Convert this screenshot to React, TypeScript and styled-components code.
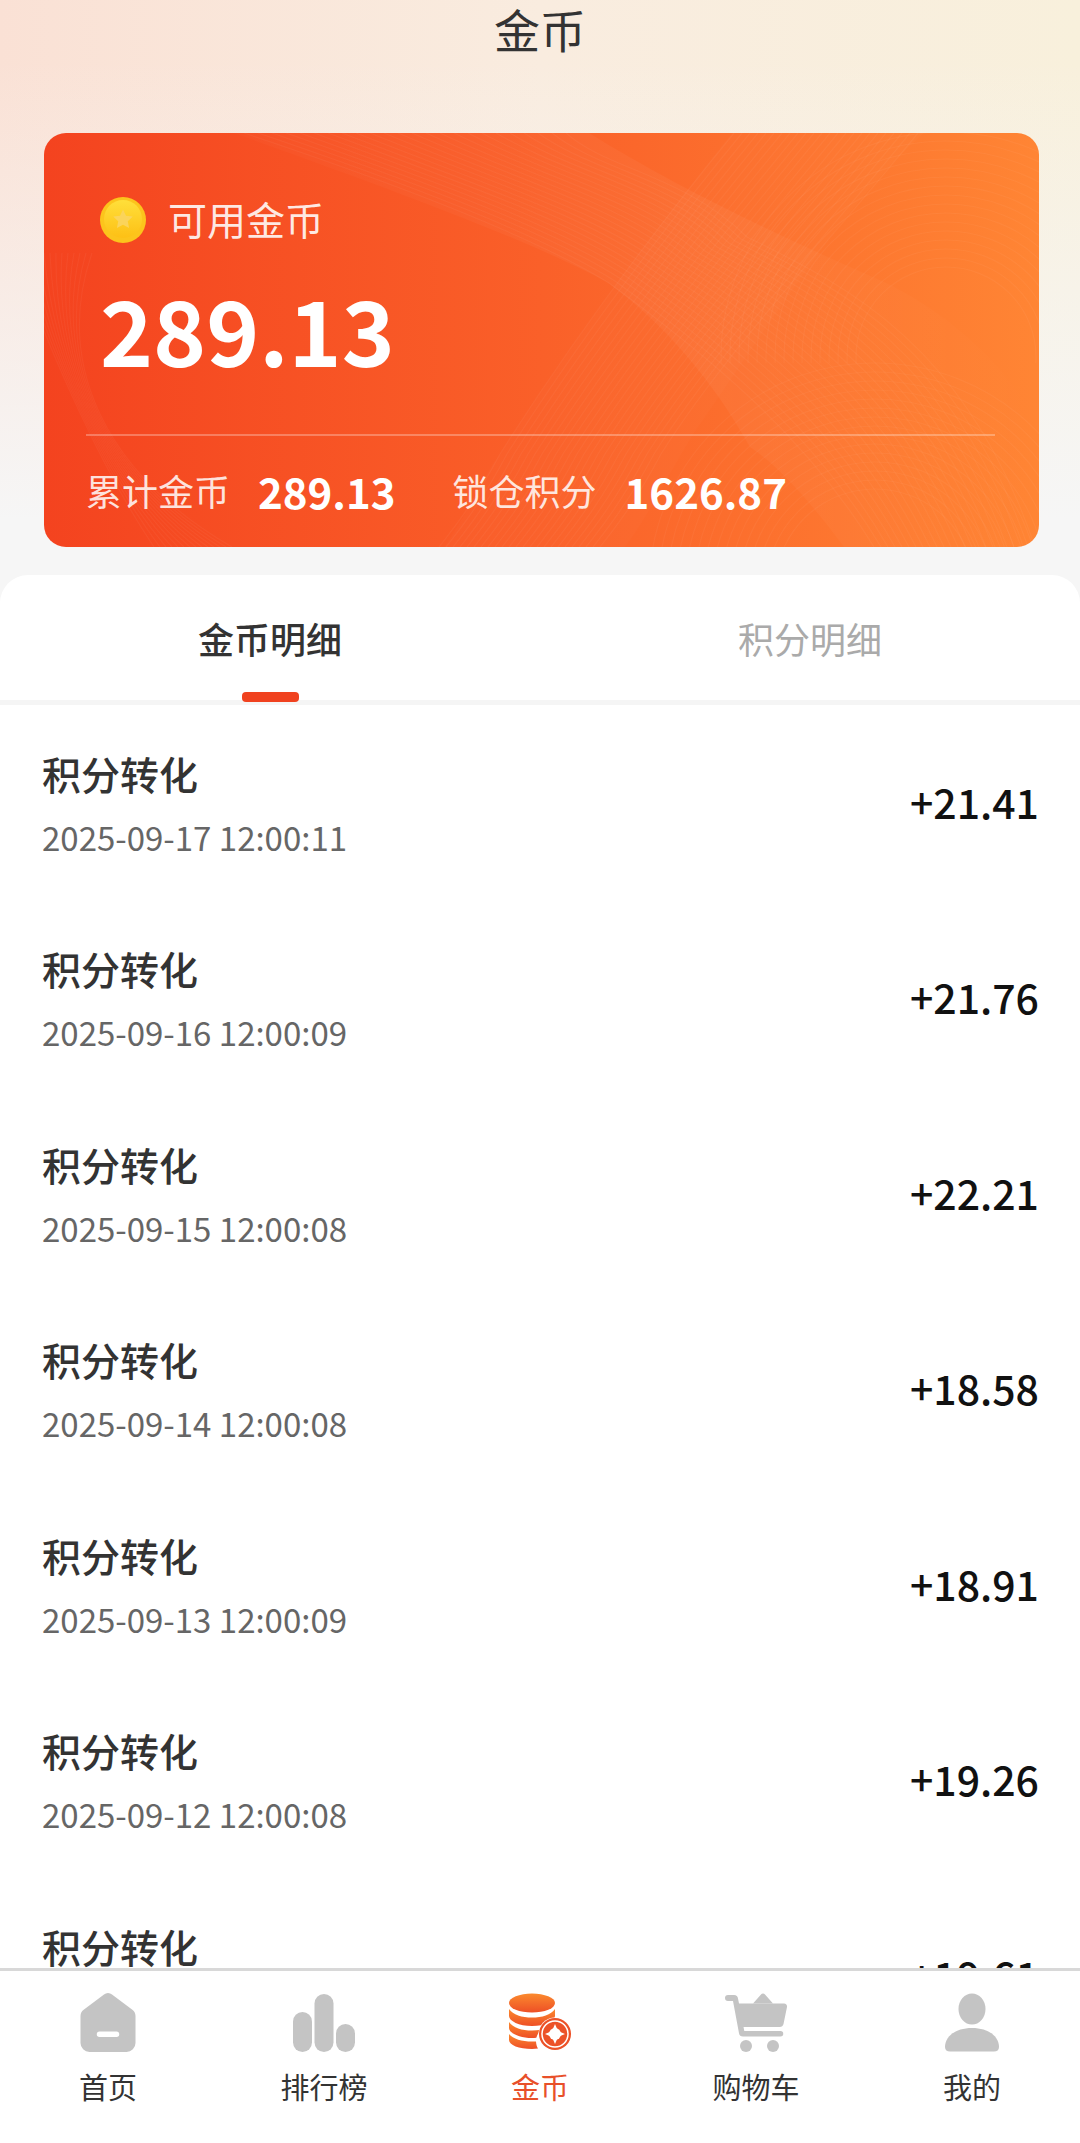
import styled, { createGlobalStyle } from "styled-components";

const records = [
  { time: "2025-09-17 12:00:11", amount: "+21.41" },
  { time: "2025-09-16 12:00:09", amount: "+21.76" },
  { time: "2025-09-15 12:00:08", amount: "+22.21" },
  { time: "2025-09-14 12:00:08", amount: "+18.58" },
  { time: "2025-09-13 12:00:09", amount: "+18.91" },
  { time: "2025-09-12 12:00:08", amount: "+19.26" },
  { time: "2025-09-11 12:00:08", amount: "+19.61" },
];

const upperRings = Array.from({ length: 16 }, (_, i) => 90 + i * 9);
const lowerRings = Array.from({ length: 15 }, (_, i) => 100 + i * 9);
const bandLines = Array.from({ length: 24 }, (_, i) => i);
const leftLines = Array.from({ length: 14 }, (_, i) => i * 6);

function CardPattern() {
  return (
    <Pattern viewBox="0 0 995 414" preserveAspectRatio="none">
      <defs>
        <linearGradient id="bandFade" x1="0" y1="0" x2="1" y2="0">
          <stop offset="0" stopColor="#fff" stopOpacity="0.015" />
          <stop offset="0.6" stopColor="#fff" stopOpacity="0.04" />
          <stop offset="1" stopColor="#fff" stopOpacity="0" />
        </linearGradient>
        <clipPath id="upperClip">
          <rect x="560" y="0" width="435" height="230" />
        </clipPath>
      </defs>
      <path
        d="M190 0 L545 0 C635 56 742 106 831 145 C900 175 960 230 995 290 L995 414 L800 414 C760 360 730 330 706 314 C670 249 620 190 563 149 C500 115 400 75 190 0 Z"
        fill="url(#bandFade)"
      />
      <path d="M688 0 L880 0 C800 70 720 200 650 300 C620 350 600 390 581 414 L400 414 C430 370 440 340 456 321 C520 220 600 110 688 0 Z" fill="#fff" opacity="0.015" />
      <g fill="none" stroke="#fff" strokeOpacity="0.04" strokeWidth="1.2">
        <g clipPath="url(#upperClip)">
          {upperRings.map((r) => (
            <circle key={r} cx="902" cy="224" r={r} />
          ))}
        </g>
        {lowerRings.map((r) => (
          <circle key={r} cx="831" cy="456" r={r} />
        ))}
        {bandLines.map((i) => (
          <path key={`a${i}`} d={`M${200 + i * 14} 0 C${380 + i * 8} ${60 - i} ${500 + i * 6} ${110 - i * 3} ${565 + i * 6} ${150 - i * 2} C${660 + i * 6} ${220 - i * 3} ${760 + i * 7} ${300 - i * 4} ${830 + i * 7} 414`} />
        ))}
        {bandLines.map((i) => (
          <path key={`b${i}`} d={`M${690 + i * 8} 0 C${600 + i * 8} 110 ${520 + i * 7} 220 ${456 + i * 7} 321 C${430 + i * 7} 370 ${410 + i * 7} 395 ${395 + i * 7} 414`} />
        ))}
        {leftLines.map((d) => (
          <path key={`c${d}`} d={`M${-30 + d} 120 C10 230 60 340 ${110 + d} 414`} />
        ))}
      </g>
    </Pattern>
  );
}

function CoinBadge() {
  return (
    <CoinSvg viewBox="0 0 46 46">
      <defs>
        <linearGradient id="coinFace" x1="0" y1="0" x2="0" y2="1">
          <stop offset="0" stopColor="#ffdf3a" />
          <stop offset="1" stopColor="#fdc015" />
        </linearGradient>
      </defs>
      <circle cx="23" cy="23" r="23" fill="#fcc41c" />
      <circle cx="23" cy="22" r="19" fill="url(#coinFace)" />
      <path d="M23 12.500l3 6.300 6.800.8-5 4.700 1.300 6.800-6.100-3.400-6.100 3.400 1.300-6.800-5-4.700 6.800-.8z" fill="#fbd45a" />
    </CoinSvg>
  );
}

function HomeIcon() {
  return (
    <svg width="64" height="64" viewBox="0 0 64 64">
      <path
        fillRule="evenodd"
        fill="#c4c4c4"
        d="M28 3.500a6 6 0 0 1 8 0l20 15a8 8 0 0 1 3.500 6.500v27a9 9 0 0 1-9 9h-37a9 9 0 0 1-9-9v-27a8 8 0 0 1 3.500-6.500zM23.500 40.500a2 2 0 0 0 0 5.500h17a2 2 0 0 0 0-5.500z"
      />
    </svg>
  );
}

function RankIcon() {
  return (
    <svg width="64" height="64" viewBox="0 0 64 64">
      <g fill="#c4c4c4">
        <rect x="1" y="21" width="19" height="40" rx="9.500" />
        <rect x="22.500" y="3" width="19" height="58" rx="9.500" />
        <rect x="44" y="33" width="19" height="28" rx="9.500" />
      </g>
    </svg>
  );
}

function CoinsIcon() {
  return (
    <svg width="64" height="64" viewBox="0 0 64 64">
      <defs>
        <linearGradient id="stack" x1="0" y1="0" x2="0" y2="1">
          <stop offset="0" stopColor="#fb8a2e" />
          <stop offset="1" stopColor="#ee4f26" />
        </linearGradient>
      </defs>
      <ellipse cx="24" cy="12" rx="23" ry="9.500" fill="url(#stack)" />
      <path fill="url(#stack)" d="M1 18c4 6 13 8.500 23 8.500s19-2.500 23-8.500v7c0 5-10 10-23 10S1 30 1 25z" />
      <path fill="url(#stack)" d="M1 31c4 6 13 8.500 23 8.500 3 0 6-.3 9-.8-2.500 2.600-4 5.400-4.700 8.100-1.400.2-2.800.2-4.300.2C11 47 1 42 1 37z" />
      <path fill="url(#stack)" d="M1 43c4 5 13 7.500 23 7.500h4c.1 2.500.8 5 2 7-2 .3-4 .5-6 .5C11 58 1 54 1 49z" />
      <circle cx="47" cy="43" r="16.500" fill="#fff" />
      <circle cx="47" cy="43" r="16" fill="#ec5228" />
      <circle cx="47" cy="43" r="13" fill="none" stroke="#fff" strokeWidth="1.500" />
      <path fill="#fff" d="M47 33l3 7 7 3-7 3-3 7-3-7-7-3 7-3z" />
      <circle cx="47" cy="43" r="6" fill="#fff" />
    </svg>
  );
}

function CartIcon() {
  return (
    <svg width="64" height="64" viewBox="0 0 64 64">
      <g fill="#c4c4c4">
        <path d="M37 3.500a2.500 2.500 0 0 1 4 0l8 9h-20z" />
        <path d="M4 4h6a4 4 0 0 1 4 3.500l1 5h45a3 3 0 0 1 3 3.500l-3.500 17a4 4 0 0 1-4 3H19.500l.8 4h36.200a2.500 2.500 0 0 1 0 5.500H19a4 4 0 0 1-4-3.300L9 10H4a3 3 0 0 1 0-6z" />
        <circle cx="22" cy="55" r="6" />
        <circle cx="49" cy="55" r="6" />
      </g>
    </svg>
  );
}

function UserIcon() {
  return (
    <svg width="64" height="64" viewBox="0 0 64 64">
      <g fill="#c4c4c4">
        <ellipse cx="32" cy="18" rx="13.500" ry="15.500" />
        <path d="M32 37c16 0 27 8 27 19 0 3-2 4.500-5 4.500H10c-3 0-5-1.500-5-4.500 0-11 11-19 27-19z" />
      </g>
    </svg>
  );
}

const navItems = [
  { label: "首页", icon: <HomeIcon /> },
  { label: "排行榜", icon: <RankIcon /> },
  { label: "金币", icon: <CoinsIcon />, active: true },
  { label: "购物车", icon: <CartIcon /> },
  { label: "我的", icon: <UserIcon /> },
];

export default function App() {
  return (
    <Page>
      <GlobalStyle />
      <TitleBar>金币</TitleBar>
      <BalanceCard>
        <CardPattern />
        <LabelRow>
          <CoinBadge />
          <span>可用金币</span>
        </LabelRow>
        <Balance>289.13</Balance>
        <StatsRow>
          <StatLabel>累计金币</StatLabel>
          <StatValue>289.13</StatValue>
          <StatLabel $spaced>锁仓积分</StatLabel>
          <StatValue>1626.87</StatValue>
        </StatsRow>
      </BalanceCard>
      <Panel>
        <Tabs>
          <Tab $active>金币明细</Tab>
          <Tab>积分明细</Tab>
        </Tabs>
        {records.map((r) => (
          <Row key={r.time}>
            <div>
              <RowTitle>积分转化</RowTitle>
              <RowTime>{r.time}</RowTime>
            </div>
            <Amount>{r.amount}</Amount>
          </Row>
        ))}
      </Panel>
      <BottomNav>
        {navItems.map((item) => (
          <NavItem key={item.label} $active={item.active}>
            {item.icon}
            <span>{item.label}</span>
          </NavItem>
        ))}
      </BottomNav>
    </Page>
  );
}

const GlobalStyle = createGlobalStyle`
  html, body {
    margin: 0;
    padding: 0;
    background: #f6f6f6;
    font-family: "Noto Sans CJK SC", "Noto Sans", sans-serif;
  }
`;

const Page = styled.div`
  width: 1080px;
  height: 2143px;
  display: flex;
  flex-direction: column;
  overflow: hidden;
  background:
    linear-gradient(180deg, rgba(246, 246, 246, 0) 0, rgba(246, 246, 246, 0) 60px, #f6f6f6 520px),
    linear-gradient(90deg, #fae1d5 0%, #f9ecdf 50%, #f8f0dc 100%);
`;

const TitleBar = styled.div`
  height: 56px;
  display: flex;
  align-items: center;
  justify-content: center;
  font-size: 46px;
  line-height: 56px;
  color: #333;
`;

const BalanceCard = styled.section`
  position: relative;
  overflow: hidden;
  height: 414px;
  margin: 77px 41px 0 44px;
  padding: 0 44px 0 42px;
  box-sizing: border-box;
  border-radius: 22px;
  color: #fff;
  background: linear-gradient(90deg, #f4431f 0%, #fa6029 50%, #ff8534 100%);
  display: flex;
  flex-direction: column;
`;

const Pattern = styled.svg`
  position: absolute;
  inset: 0;
  width: 100%;
  height: 100%;
`;

const LabelRow = styled.div`
  position: relative;
  display: flex;
  align-items: center;
  gap: 22px;
  margin-top: 64px;
  padding-left: 14px;
  height: 46px;
  font-size: 39px;
  line-height: 46px;
  color: rgba(255, 255, 255, 0.88);

  span {
    position: relative;
    top: -2px;
  }
`;

const CoinSvg = styled.svg`
  width: 46px;
  height: 46px;
`;

const Balance = styled.div`
  position: relative;
  height: 193px;
  padding: 0 0 0 14px;
  box-sizing: border-box;
  border-bottom: 2px solid rgba(255, 255, 255, 0.28);
  font-size: 90px;
  font-weight: 700;
  line-height: 170px;
`;

const StatsRow = styled.div`
  position: relative;
  display: flex;
  align-items: center;
  height: 108px;
`;

const StatLabel = styled.span<{ $spaced?: boolean }>`
  font-size: 36px;
  color: rgba(255, 255, 255, 0.85);
  margin-left: ${(props) => (props.$spaced ? "57px" : "0")};
`;

const StatValue = styled.span`
  font-size: 42px;
  font-weight: 700;
  margin-left: 28px;
`;

const Panel = styled.main`
  flex: 1;
  min-height: 0;
  overflow: hidden;
  margin-top: 28px;
  background: #fff;
  border-radius: 28px 28px 0 0;
`;

const Tabs = styled.div`
  display: grid;
  grid-template-columns: 1fr 1fr;
  height: 130px;
  box-sizing: border-box;
  border-bottom: 5px solid #f5f5f5;
`;

const Tab = styled.div<{ $active?: boolean }>`
  position: relative;
  display: flex;
  justify-content: center;
  padding-top: 37px;
  font-size: 36px;
  line-height: 52px;
  font-weight: ${(props) => (props.$active ? 500 : 400)};
  color: ${(props) => (props.$active ? "#333" : "#aaa")};

  &::after {
    content: "";
    display: ${(props) => (props.$active ? "block" : "none")};
    position: absolute;
    left: 50%;
    bottom: -2px;
    width: 57px;
    height: 10px;
    margin-left: -28px;
    border-radius: 4px;
    background: #f0421f;
  }
`;

const Row = styled.div`
  height: 195.500px;
  padding: 0 41px 0 42px;
  display: flex;
  align-items: center;
  justify-content: space-between;
`;

const RowTitle = styled.div`
  font-size: 39px;
  font-weight: 500;
  line-height: 56px;
  color: #333;
`;

const RowTime = styled.div`
  font-size: 33px;
  line-height: 48px;
  margin-top: 12px;
  color: #666;
`;

const Amount = styled.div`
  font-size: 41px;
  font-weight: 500;
  color: #111;
  margin-top: -4px;
`;

const BottomNav = styled.nav`
  height: 175px;
  box-sizing: border-box;
  border-top: 3px solid #d8d8d8;
  background: #fff;
  display: grid;
  grid-template-columns: repeat(5, 1fr);
  padding-top: 20px;
`;

const NavItem = styled.div<{ $active?: boolean }>`
  display: flex;
  flex-direction: column;
  align-items: center;
  gap: 10px;
  font-size: 29px;
  line-height: 42px;
  color: ${(props) => (props.$active ? "#e8502a" : "#333")};
`;
